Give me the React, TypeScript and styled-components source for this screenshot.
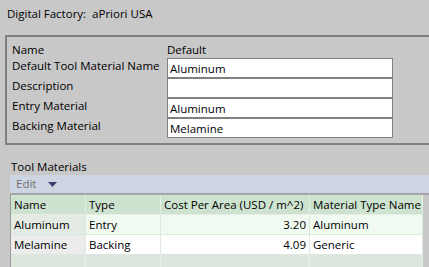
import React from 'react';
import styled, { createGlobalStyle } from 'styled-components';

const GlobalStyle = createGlobalStyle`
  body {
    margin: 0;
    background: #c8c8c8;
    font-family: "Open Sans", "Noto Sans", sans-serif;
    font-size: 11.5px;
    color: #000;
  }
`;

const fields = [
  { label: 'Default Tool Material Name', value: 'Aluminum' },
  { label: 'Description', value: '' },
  { label: 'Entry Material', value: 'Aluminum' },
  { label: 'Backing Material', value: 'Melamine' },
];

const materials = [
  { name: 'Aluminum', type: 'Entry', cost: '3.20', materialType: 'Aluminum' },
  { name: 'Melamine', type: 'Backing', cost: '4.09', materialType: 'Generic' },
];

const App = () => {
  return (
    <Page>
      <GlobalStyle />
      <Title>Digital Factory:&nbsp; aPriori USA</Title>
      <GroupBox>
        <FormGrid>
          <Label>Name</Label>
          <Label>Default</Label>
          {fields.map((f) => (
            <React.Fragment key={f.label}>
              <Label>{f.label}</Label>
              <Input readOnly value={f.value} />
            </React.Fragment>
          ))}
        </FormGrid>
      </GroupBox>
      <Section>
        <Caption>Tool Materials</Caption>
        <Toolbar>
          <EditButton>
            Edit
            <svg width="9" height="5" viewBox="0 0 9 5">
              <polygon points="0,0 9,0 4.5,5" fill="#3b3f6c" />
            </svg>
          </EditButton>
        </Toolbar>
        <Table>
          <HeadCell>Name</HeadCell>
          <HeadCell>Type</HeadCell>
          <HeadCell>Cost Per Area (USD / m^2)</HeadCell>
          <HeadCell>Material Type Name</HeadCell>
          {materials.map((m, i) => (
            <React.Fragment key={m.name}>
              <NameCell alt={i % 2 === 1}>{m.name}</NameCell>
              <Cell alt={i % 2 === 1}>{m.type}</Cell>
              <Cell alt={i % 2 === 1} right>{m.cost}</Cell>
              <Cell alt={i % 2 === 1}>{m.materialType}</Cell>
            </React.Fragment>
          ))}
          <EmptyCell />
          <EmptyCell />
          <EmptyCell />
          <EmptyCell />
        </Table>
      </Section>
    </Page>
  );
};

interface CellProps {
  alt?: boolean;
  right?: boolean;
}

const Page = styled.div`
  width: 429px;
  height: 267px;
  overflow: hidden;
`;

const Title = styled.div`
  height: 35px;
  box-sizing: border-box;
  padding: 6px 0 0 7px;
  line-height: 16px;
`;

const GroupBox = styled.div`
  margin-left: 5px;
  height: 110px;
  box-sizing: border-box;
  border: 2px solid #808080;
  border-right: none;
`;

const FormGrid = styled.div`
  display: grid;
  grid-template-columns: 155px 226px;
  grid-template-rows: 21px repeat(4, 20px);
  padding-left: 5px;
`;

const Label = styled.div`
  line-height: 16px;
  white-space: nowrap;
  &:nth-child(-n + 2) {
    align-self: end;
  }
`;

const Input = styled.input`
  box-sizing: border-box;
  width: 226px;
  height: 20px;
  margin: 0;
  padding: 0 2px;
  border: 1px solid #808080;
  background: #fff;
  font: inherit;
  line-height: 18px;
  color: #000;
  outline: none;
`;

const Section = styled.div`
  padding-left: 10px;
`;

const Caption = styled.div`
  margin-top: 14px;
  padding-left: 1px;
  line-height: 16px;
`;

const Toolbar = styled.div`
  height: 18px;
  background: #ced5e2;
  border-bottom: 2px solid #a3a5a8;
  display: flex;
  align-items: center;
`;

const EditButton = styled.div`
  display: flex;
  align-items: center;
  gap: 12px;
  padding-left: 6px;
  color: #707070;
  line-height: 16px;
`;

const Table = styled.div`
  display: grid;
  width: 413px;
  grid-template-columns: 75px 75px 149px 113px;
  grid-auto-rows: 20px;
  border-left: 1px solid #9a9a9a;
`;

const HeadCell = styled.div`
  box-sizing: border-box;
  padding: 0 3px;
  background: #cde3cf;
  border-right: 1px solid #e6efe6;
  border-bottom: 1px solid #e6efe6;
  line-height: 19px;
  white-space: nowrap;
  overflow: hidden;
`;

const Cell = styled.div<CellProps>`
  box-sizing: border-box;
  padding: 0 3px;
  background: ${(p) => (p.alt ? '#ffffff' : '#f0faf0')};
  border-right: 1px solid #dfe8df;
  border-bottom: 1px solid #dfe8df;
  line-height: 19px;
  text-align: ${(p) => (p.right ? 'right' : 'left')};
  white-space: nowrap;
`;

const NameCell = styled(Cell)`
  background: ${(p) => (p.alt ? '#ececec' : '#e4ebe4')};
`;

const EmptyCell = styled.div`
  background: #dde6dd;
  border-right: 1px solid #e8eee8;
`;

export default App;
